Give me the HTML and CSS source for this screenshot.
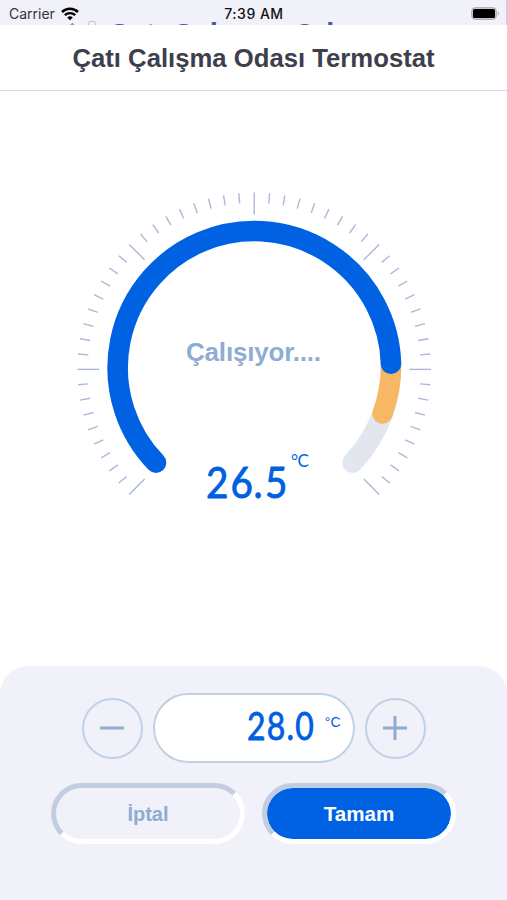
FILE: index.html
```
<!DOCTYPE html>
<html lang="tr">
<head>
  <meta charset="UTF-8">
  <title>Termostat</title>
  <link rel="stylesheet" href="styles.css">
</head>
<body>

<div class="status-bar">
  <div class="behind">
    <svg width="40" height="10" viewBox="0 0 40 10">
      <path d="M2 6 l2.500-2.500 2 2.500" fill="#8f9bc4"/>
      <rect x="20.500" y="2.500" width="7" height="6" rx="2" fill="none" stroke="#b4c0de"/>
    </svg>
    <span>Çatı Çalışma Odası</span>
  </div>
  <div class="carrier">
    <span>Carrier</span>
    <svg width="18" height="14" viewBox="0 0 18 14">
      <path d="M1 5 A11.500 11.500 0 0 1 17 5" fill="none" stroke="#000" stroke-width="2.500"/>
      <path d="M3.800 8.200 A7.500 7.500 0 0 1 14.200 8.200" fill="none" stroke="#000" stroke-width="2.300"/>
      <path d="M9 13.300 L6.200 10.500 A4 4 0 0 1 11.800 10.500 Z" fill="#000"/>
    </svg>
  </div>
  <div class="clock">7:39 AM</div>
  <svg class="battery" width="32" height="16" viewBox="0 0 32 16">
    <rect x="2.500" y="1.500" width="25" height="12" rx="4" fill="#c4c4c9" stroke="#b3b3b8"/>
    <rect x="4" y="3" width="22" height="9" rx="1.500" fill="#000"/>
    <path d="M28.800 5 q2.400 2.500 0 5 z" fill="#a9a9ae"/>
  </svg>
</div>

<h1>Çatı Çalışma Odası Termostat</h1>

<div class="dial">
  <svg width="507" height="575" viewBox="0 91 507 575">
    <g id="ticks" class="ticks"></g>
    <path class="arc rest" d="M382.600 413.500 A136.700 136.700 0 0 1 352.600 462.700"/>
    <path class="arc target" d="M391 363.800 A136.700 136.700 0 0 1 382.600 413.500"/>
    <path class="arc current" d="M156 462.700 A136.700 136.700 0 1 1 391 363.800"/>
    <text class="state" x="186" y="361" textLength="135">Çalışıyor....</text>
    <text class="temp" x="224 250.500 275.500 288" y="498">26.5</text>
    <text class="unit" x="291 297.500" y="467">°C</text>
  </svg>
</div>

<div class="panel">
  <div class="set-row">
    <button class="round" onclick="changeTarget(-0.5)">
      <svg width="26" height="26" viewBox="0 0 26 26"><path d="M1 13 H25"/></svg>
    </button>
    <div class="value"><span id="target" class="number">28.0</span><span class="degree">°C</span></div>
    <button class="round" onclick="changeTarget(0.5)">
      <svg width="26" height="26" viewBox="0 0 26 26"><path d="M1 13 H25 M13 1 V25"/></svg>
    </button>
  </div>
  <div class="action-row">
    <button class="action">İptal</button>
    <button class="action ok">Tamam</button>
  </div>
</div>

<script>
  let target = 28;

  function changeTarget(step) {
    target += step;
    document.getElementById('target').textContent = target.toFixed(1);
  }

  // one tick every 5 degrees, a long one every 45
  function drawTicks() {
    let html = '';
    for (let a = -135; a <= 135; a += 5) {
      const inner = a % 45 === 0 ? 155 : 166.5;
      const sin = Math.sin(a * Math.PI / 180);
      const cos = Math.cos(a * Math.PI / 180);
      html += `<line x1="${254.2 + inner * sin}" y1="${369.4 - inner * cos}" x2="${254.2 + 176.8 * sin}" y2="${369.4 - 176.8 * cos}"/>`;
    }
    document.getElementById('ticks').innerHTML = html;
  }

  drawTicks();
</script>

</body>
</html>
```
FILE: styles.css
```
* {
  box-sizing: border-box;
}

body {
  margin: 0;
  height: 900px;
  display: flex;
  flex-direction: column;
  overflow: hidden;
  background: white;
  font-family: "Liberation Sans", Arial, sans-serif;
}

.status-bar {
  position: relative;
  height: 25px;
  flex: none;
  display: grid;
  grid-template-columns: 1fr auto 1fr;
  align-items: center;
  padding: 2px 5px 0 9px;
  border-right: 1px solid #c3cdea;
  background: #f0f1f9;
  overflow: hidden;
  font-family: Inter, sans-serif;
  font-size: 14px;
  color: #111;
}

/* title of the screen under the sheet */
.behind {
  position: absolute;
  left: 68px;
  top: 19px;
  display: flex;
  font: bold 29.5px/26px "Liberation Sans", Arial, sans-serif;
  white-space: nowrap;
  color: #4a5a9c;
}

.behind span {
  margin-top: 2px;
}

.carrier {
  position: relative;
  display: flex;
  align-items: center;
  gap: 6px;
  color: #333;
}

.clock {
  position: relative;
  right: 1px;
  font-weight: 500;
  letter-spacing: 0.5px;
}

.battery {
  position: relative;
  justify-self: end;
}

h1 {
  flex: none;
  height: 66px;
  margin: 0;
  border-bottom: 1px solid #d3d5ec;
  text-align: center;
  font-size: 25.7px;
  line-height: 67px;
  color: #3e3f4d;
}

.dial {
  height: 575px;
  flex: none;
}

.dial svg {
  display: block;
}

.ticks line {
  stroke: #abb9d8;
  stroke-width: 1.4;
}

.arc {
  fill: none;
  stroke-width: 20.6;
  stroke-linecap: round;
}

.rest {
  stroke: #e2e7ef;
}

.target {
  stroke: #f7b765;
}

.current {
  stroke: #0062e3;
}

.state {
  font-size: 26px;
  font-weight: bold;
  fill: #8facd3;
}

.temp {
  transform: scaleX(0.92);
  font: 400 42px Lato, sans-serif;
  fill: #0060df;
  stroke: #0060df;
  stroke-width: 0.9;
  stroke-linejoin: round;
}

.unit {
  font: 17px Lato, sans-serif;
  fill: #0060df;
}

.panel {
  flex: 1;
  padding-top: 27px;
  border-radius: 28px 28px 0 0;
  background: #f0f1f9;
}

.set-row {
  display: flex;
  justify-content: center;
  align-items: center;
  gap: 10px;
}

.round {
  width: 61px;
  height: 61px;
  display: flex;
  align-items: center;
  justify-content: center;
  padding: 0;
  border: 2px solid #c0d1e5;
  border-radius: 50%;
  background: none;
}

.round path {
  stroke: #8facd3;
  stroke-width: 3;
}

.value {
  width: 202px;
  height: 70px;
  display: flex;
  justify-content: flex-end;
  padding: 9px 12px 0 0;
  border: 2px solid #c0d1e5;
  border-radius: 35px;
  background: white;
  font-family: Lato, sans-serif;
  color: #0060df;
}

.number {
  margin-right: 10px;
  transform: scaleX(0.84);
  transform-origin: right;
  font-size: 38px;
  line-height: 42px;
  letter-spacing: 1.5px;
  -webkit-text-stroke: 0.8px #0060df;
}

.degree {
  margin-top: 9px;
  font: 14px/18px "Liberation Sans", Arial, sans-serif;
}

.action-row {
  display: flex;
  justify-content: center;
  gap: 17px;
  margin-top: 20px;
}

.action {
  width: 194px;
  height: 61px;
  padding-top: 2px;
  border: 5px solid;
  border-color: #c3cde2 white white #c3cde2;
  border-radius: 31px;
  background: #f0f1f9;
  font: bold 20px "Liberation Sans", Arial, sans-serif;
  color: #8facd3;
}

.ok {
  background: #0062e3;
  background-clip: padding-box;
  font-size: 20.6px;
  color: white;
}
```
